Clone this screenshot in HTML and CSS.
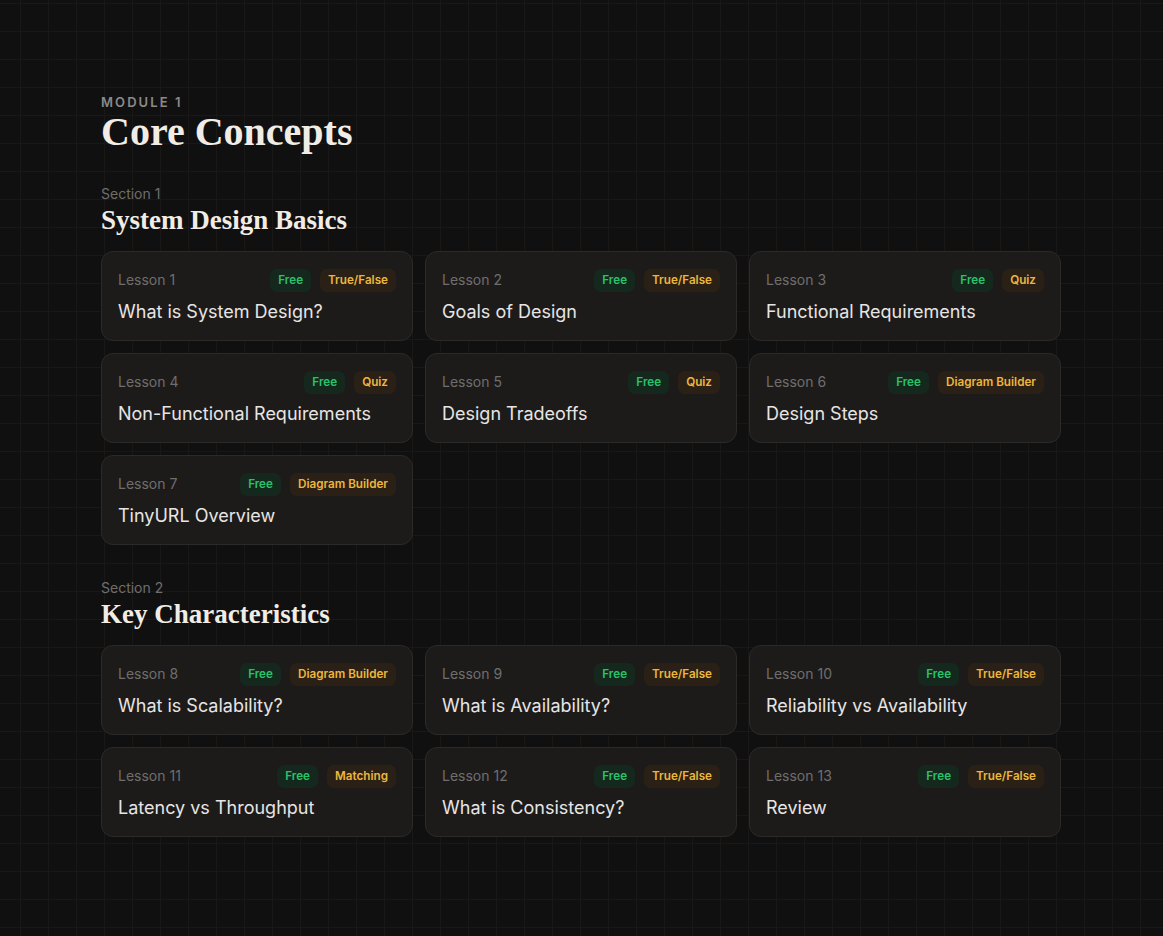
FILE: index.html
```html
<!DOCTYPE html>
<html lang="en">
<head>
<meta charset="utf-8">
<title>Core Concepts</title>
<link rel="stylesheet" href="styles.css">
</head>
<body>
<main class="page">
  <header class="module-head">
    <div class="module-label">MODULE 1</div>
    <h1 class="module-title">Core Concepts</h1>
  </header>

  <section class="section">
    <div class="section-label">Section 1</div>
    <h2 class="section-title">System Design Basics</h2>
    <div class="grid">
      <div class="card"><div class="card-top"><span class="lesson">Lesson 1</span><div class="badges"><span class="badge free">Free</span><span class="badge kind">True/False</span></div></div><div class="card-title">What is System Design?</div></div>
      <div class="card"><div class="card-top"><span class="lesson">Lesson 2</span><div class="badges"><span class="badge free">Free</span><span class="badge kind">True/False</span></div></div><div class="card-title">Goals of Design</div></div>
      <div class="card"><div class="card-top"><span class="lesson">Lesson 3</span><div class="badges"><span class="badge free">Free</span><span class="badge kind">Quiz</span></div></div><div class="card-title">Functional Requirements</div></div>
      <div class="card"><div class="card-top"><span class="lesson">Lesson 4</span><div class="badges"><span class="badge free">Free</span><span class="badge kind">Quiz</span></div></div><div class="card-title">Non-Functional Requirements</div></div>
      <div class="card"><div class="card-top"><span class="lesson">Lesson 5</span><div class="badges"><span class="badge free">Free</span><span class="badge kind">Quiz</span></div></div><div class="card-title">Design Tradeoffs</div></div>
      <div class="card"><div class="card-top"><span class="lesson">Lesson 6</span><div class="badges"><span class="badge free">Free</span><span class="badge kind">Diagram Builder</span></div></div><div class="card-title">Design Steps</div></div>
      <div class="card"><div class="card-top"><span class="lesson">Lesson 7</span><div class="badges"><span class="badge free">Free</span><span class="badge kind">Diagram Builder</span></div></div><div class="card-title">TinyURL Overview</div></div>
    </div>
  </section>

  <section class="section">
    <div class="section-label">Section 2</div>
    <h2 class="section-title">Key Characteristics</h2>
    <div class="grid">
      <div class="card"><div class="card-top"><span class="lesson">Lesson 8</span><div class="badges"><span class="badge free">Free</span><span class="badge kind">Diagram Builder</span></div></div><div class="card-title">What is Scalability?</div></div>
      <div class="card"><div class="card-top"><span class="lesson">Lesson 9</span><div class="badges"><span class="badge free">Free</span><span class="badge kind">True/False</span></div></div><div class="card-title">What is Availability?</div></div>
      <div class="card"><div class="card-top"><span class="lesson">Lesson 10</span><div class="badges"><span class="badge free">Free</span><span class="badge kind">True/False</span></div></div><div class="card-title">Reliability vs Availability</div></div>
      <div class="card"><div class="card-top"><span class="lesson">Lesson 11</span><div class="badges"><span class="badge free">Free</span><span class="badge kind">Matching</span></div></div><div class="card-title">Latency vs Throughput</div></div>
      <div class="card"><div class="card-top"><span class="lesson">Lesson 12</span><div class="badges"><span class="badge free">Free</span><span class="badge kind">True/False</span></div></div><div class="card-title">What is Consistency?</div></div>
      <div class="card"><div class="card-top"><span class="lesson">Lesson 13</span><div class="badges"><span class="badge free">Free</span><span class="badge kind">True/False</span></div></div><div class="card-title">Review</div></div>
    </div>
  </section>
</main>
</body>
</html>
```

FILE: styles.css
```css
* { box-sizing: border-box; }

html, body {
  margin: 0;
  padding: 0;
}

body {
  min-height: 936px;
  background-color: #111010;
  background-image:
    linear-gradient(to right, #191817 1px, transparent 1px),
    linear-gradient(to bottom, #191817 1px, transparent 1px);
  background-size: 28px 28px;
  background-position: 20px 3px;
  font-family: Inter, "Noto Sans", sans-serif;
  color: #e7e5e4;
}

.page {
  width: 961px;
  margin: 0 auto;
  padding: 94px 1px 60px 0;
}

.module-label {
  font-size: 13px;
  line-height: 16px;
  font-weight: 600;
  letter-spacing: 0.16em;
  color: #8b8a89;
}

.module-title {
  margin: 0;
  font-family: "Liberation Serif", "Times New Roman", serif;
  font-weight: 700;
  font-size: 40px;
  line-height: 44px;
  color: #f1ede6;
}

.section {
  margin-top: 30px;
}

.section + .section {
  margin-top: 33px;
}

.section-label {
  font-size: 14px;
  line-height: 20px;
  color: #6f6e6d;
}

.section-title {
  margin: 0 0 15px;
  font-family: "Liberation Serif", "Times New Roman", serif;
  font-weight: 700;
  font-size: 27px;
  line-height: 32px;
  color: #f1ede6;
}

.grid {
  display: grid;
  grid-template-columns: repeat(3, 1fr);
  gap: 12px;
}

.card {
  background: #1c1b1a;
  border: 1px solid #2b2a29;
  border-radius: 12px;
  padding: 17px 16px 16px;
  display: flex;
  flex-direction: column;
  gap: 8px;
  height: 90px;
}

.card-top {
  display: flex;
  align-items: center;
  justify-content: space-between;
  height: 23px;
}

.lesson {
  font-size: 14px;
  color: #6f6e6d;
  margin-top: -2px;
}

.badges {
  display: flex;
  gap: 9px;
}

.badge {
  font-size: 11.7px;
  font-weight: 600;
  line-height: 23px;
  height: 23px;
  padding: 0 8px;
  border-radius: 7px;
}

.badge.free {
  background: #15281d;
  color: #2ac26a;
}

.badge.kind {
  background: #2b2016;
  color: #ebb73c;
}

.card-title {
  font-size: 18px;
  line-height: 24px;
  color: #e7e5e4;
}
```
